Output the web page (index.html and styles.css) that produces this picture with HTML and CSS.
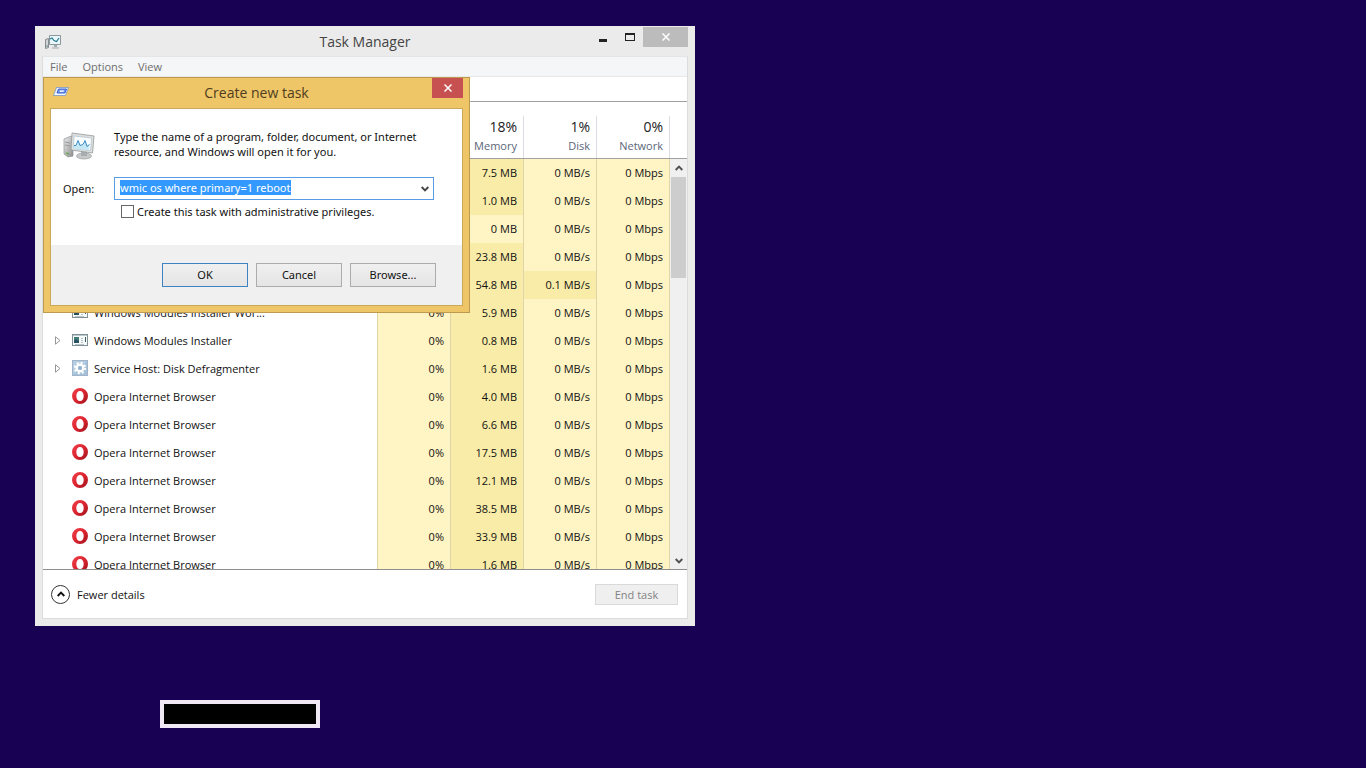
FILE: index.html
```html
<!DOCTYPE html>
<html lang="en">
    <head>
        <title>Task Manager</title>
        <meta charset="utf-8" />
        <meta name="viewport" content="width=device-width,initial-scale=1">
        <link rel="stylesheet" href="styles.css">
    </head>
    <body>
        <svg class="sprite" aria-hidden="true">
            <defs>
                <linearGradient id="red" x1="0" y1="0" x2="1" y2="1">
                    <stop offset="0" stop-color="#f0424c" />
                    <stop offset="0.5" stop-color="#dc2531" />
                    <stop offset="1" stop-color="#9c121b" />
                </linearGradient>
                <linearGradient id="metal" x1="0" y1="0" x2="1" y2="1">
                    <stop offset="0" stop-color="#eeeeee" />
                    <stop offset="1" stop-color="#8c8c8c" />
                </linearGradient>
            </defs>
            <symbol id="opera" viewBox="0 0 16 16">
                <path fill="url(#red)" fill-rule="evenodd" d="M8 0a8 8 0 1 0 0 16A8 8 0 0 0 8 0zM8 3c2.200 0 3.700 2 3.700 5S10.200 13 8 13 4.300 11 4.300 8 5.800 3 8 3z" />
            </symbol>
            <symbol id="module" viewBox="0 0 16 14">
                <rect x="0.5" y="1.500" width="15" height="11" fill="#f6faf9" stroke="#829096" />
                <path d="M1 2.500h14" stroke="#bcc9cc" />
                <rect x="2" y="4" width="5" height="6" fill="#417b76" />
                <path d="M2 8l2-2 2 2 1-1v3H2z" fill="#284f61" />
                <path d="M9 5.500h2M9 7.500h2M9 9.500h2M3 11.500h9" stroke="#b4c4ca" />
                <path d="M13.500 4v5" stroke="#3c5961" />
            </symbol>
            <symbol id="gear" viewBox="0 0 16 16">
                <rect x="0.5" y="0.5" width="15" height="15" fill="#b5cde2" stroke="#9fb4c8" />
                <path d="M1 15L15 1v14z" fill="#a6c1da" />
                <circle cx="8" cy="8" r="3.300" fill="none" stroke="#fff" stroke-width="2.400" />
                <circle cx="8" cy="8" r="5.200" fill="none" stroke="#fff" stroke-width="2" stroke-dasharray="2 2.084" />
                <circle cx="8" cy="8" r="2" fill="#93b3d1" />
            </symbol>
            <symbol id="monitor" viewBox="0 0 32 32">
                <path d="M1 8l7-3 2 2v18l-5 1-4-3z" fill="url(#metal)" stroke="#8e9496" stroke-width="0.7" />
                <path d="M2 11l5 1M2 14l5 1" stroke="#999" />
                <path d="M3 22l3 1" stroke="#67a954" stroke-width="1.500" />
                <ellipse cx="21" cy="25" rx="7.500" ry="3" fill="#c6c9ca" stroke="#999" stroke-width="0.7" />
                <path d="M18 20h6v5h-6z" fill="#a9adaf" />
                <path d="M9 2l22 3-1.500 17L8 19z" fill="#dedfdf" stroke="#929899" stroke-width="0.8" />
                <path d="M11 5l17.500 2-1 12.500-17-2z" fill="#fafdff" stroke="#a5b9c5" stroke-width="0.6" />
                <path d="M10.500 14l3 1 2-5 2 5 3-1 2-4 2 5 2-2-.500 6-15.500-1z" fill="#c6e8f5" />
                <path d="M11 14.500l2 0 2-5 2 5 3-1 2-4 2 6 2.500-2" fill="none" stroke="#348bc2" stroke-width="1" />
            </symbol>
            <symbol id="taskmgr" viewBox="0 0 16 16">
                <path d="M0.5 5.500l3-1v9l-3 1z" fill="#d2d5d7" stroke="#858d91" />
                <path d="M1 12h2" stroke="#668872" />
                <path d="M4.500 1.500h11v9h-11z" fill="#e9f7fb" stroke="#8a999e" />
                <path d="M5 5l2-1 2 2.500 2.500 1L14 4" fill="none" stroke="#21798d" stroke-width="1.200" />
                <path d="M9 11h3v2H9zM7 13.500h7v1H7z" fill="#9eabaf" />
            </symbol>
            <symbol id="run" viewBox="0 0 16 12">
                <path d="M3.500 1.500h12l-3 8H.5z" fill="#f2f7ff" stroke="#7795c7" stroke-width="0.8" />
                <path d="M5.500 3h8l-1.500 4h-8z" fill="#6c94f0" stroke="#3d64cc" />
                <path d="M7 4.200h4L10.500 6H6.500z" fill="#dfeaff" />
            </symbol>
            <symbol id="chevron" viewBox="0 0 8 6">
                <path d="M0.700 1L4 4.300 7.300 1" fill="none" stroke="currentColor" stroke-width="1.900" />
            </symbol>
            <symbol id="cross" viewBox="0 0 8 8">
                <path d="M0.500 0.500l7 7M7.500 0.500l-7 7" stroke="currentColor" stroke-width="1.500" />
            </symbol>
            <symbol id="expand" viewBox="0 0 6 9">
                <path d="M0.500 0.800v7.400L5 4.500z" fill="#fff" stroke="#969696" />
            </symbol>
        </svg>

        <main class="window">
            <header class="titlebar">
                <svg class="app-icon"><use href="#taskmgr" /></svg>
                <h1>Task Manager</h1>
                <div class="controls">
                    <button class="control" aria-label="Minimize"><span class="min"></span></button>
                    <button class="control" aria-label="Maximize"><span class="max"></span></button>
                    <button class="control close" aria-label="Close"><svg class="cross"><use href="#cross" /></svg></button>
                </div>
            </header>
            <div class="client">
                <nav class="menu">
                    <button>File</button>
                    <button>Options</button>
                    <button>View</button>
                </nav>
                <div class="tabs"></div>
                <div class="list">
                    <table>
                        <colgroup>
                            <col />
                            <col class="num" />
                            <col class="num" />
                            <col class="num" />
                            <col class="num" />
                        </colgroup>
                        <thead>
                            <tr>
                                <th></th>
                                <th></th>
                                <th><b>18%</b>Memory</th>
                                <th><b>1%</b>Disk</th>
                                <th><b>0%</b>Network</th>
                            </tr>
                        </thead>
                        <tbody>
                            <tr><td></td><td></td><td class="mid">7.5 MB</td><td>0 MB/s</td><td>0 Mbps</td></tr>
                            <tr><td></td><td></td><td class="mid">1.0 MB</td><td>0 MB/s</td><td>0 Mbps</td></tr>
                            <tr><td></td><td></td><td>0 MB</td><td>0 MB/s</td><td>0 Mbps</td></tr>
                            <tr><td></td><td></td><td class="mid">23.8 MB</td><td>0 MB/s</td><td>0 Mbps</td></tr>
                            <tr><td></td><td></td><td class="mid">54.8 MB</td><td class="mid">0.1 MB/s</td><td>0 Mbps</td></tr>
                            <tr><td><div class="name"><i></i><svg><use href="#module" /></svg>Windows Modules Installer Wor...</div></td><td>0%</td><td class="mid">5.9 MB</td><td>0 MB/s</td><td>0 Mbps</td></tr>
                            <tr><td><div class="name"><i><svg><use href="#expand" /></svg></i><svg><use href="#module" /></svg>Windows Modules Installer</div></td><td>0%</td><td class="mid">0.8 MB</td><td>0 MB/s</td><td>0 Mbps</td></tr>
                            <tr><td><div class="name"><i><svg><use href="#expand" /></svg></i><svg><use href="#gear" /></svg>Service Host: Disk Defragmenter</div></td><td>0%</td><td class="mid">1.6 MB</td><td>0 MB/s</td><td>0 Mbps</td></tr>
                            <tr><td><div class="name"><i></i><svg><use href="#opera" /></svg>Opera Internet Browser</div></td><td>0%</td><td class="mid">4.0 MB</td><td>0 MB/s</td><td>0 Mbps</td></tr>
                            <tr><td><div class="name"><i></i><svg><use href="#opera" /></svg>Opera Internet Browser</div></td><td>0%</td><td class="mid">6.6 MB</td><td>0 MB/s</td><td>0 Mbps</td></tr>
                            <tr><td><div class="name"><i></i><svg><use href="#opera" /></svg>Opera Internet Browser</div></td><td>0%</td><td class="mid">17.5 MB</td><td>0 MB/s</td><td>0 Mbps</td></tr>
                            <tr><td><div class="name"><i></i><svg><use href="#opera" /></svg>Opera Internet Browser</div></td><td>0%</td><td class="mid">12.1 MB</td><td>0 MB/s</td><td>0 Mbps</td></tr>
                            <tr><td><div class="name"><i></i><svg><use href="#opera" /></svg>Opera Internet Browser</div></td><td>0%</td><td class="mid">38.5 MB</td><td>0 MB/s</td><td>0 Mbps</td></tr>
                            <tr><td><div class="name"><i></i><svg><use href="#opera" /></svg>Opera Internet Browser</div></td><td>0%</td><td class="mid">33.9 MB</td><td>0 MB/s</td><td>0 Mbps</td></tr>
                            <tr><td><div class="name"><i></i><svg><use href="#opera" /></svg>Opera Internet Browser</div></td><td>0%</td><td class="mid">1.6 MB</td><td>0 MB/s</td><td>0 Mbps</td></tr>
                        </tbody>
                    </table>
                    <div class="side">
                        <div class="side-head"></div>
                        <div class="scrollbar">
                            <button class="arrow" aria-label="Scroll up"><svg class="chevron up"><use href="#chevron" /></svg></button>
                            <div class="track"><div class="thumb"></div></div>
                            <button class="arrow" aria-label="Scroll down"><svg class="chevron"><use href="#chevron" /></svg></button>
                        </div>
                    </div>
                </div>
                <footer class="footer">
                    <button class="fewer"><span class="round"><svg class="chevron up"><use href="#chevron" /></svg></span>Fewer details</button>
                    <button class="end" disabled>End task</button>
                </footer>
            </div>
        </main>

        <form class="dialog" role="dialog" aria-labelledby="dialog-title">
            <header class="titlebar">
                <svg class="app-icon"><use href="#run" /></svg>
                <h2 id="dialog-title">Create new task</h2>
                <div class="controls">
                    <button type="button" class="control close" aria-label="Close"><svg class="cross"><use href="#cross" /></svg></button>
                </div>
            </header>
            <div class="panel">
                <div class="fields">
                    <div class="intro">
                        <svg class="monitor"><use href="#monitor" /></svg>
                        <p>Type the name of a program, folder, document, or Internet resource, and Windows will open it for you.</p>
                    </div>
                    <div class="open">
                        <label for="command">Open:</label>
                        <div class="combo">
                            <input type="text" id="command" value="wmic os where primary=1 reboot" autocomplete="off" spellcheck="false" />
                            <button type="button" aria-label="Show history"><svg class="chevron"><use href="#chevron" /></svg></button>
                        </div>
                    </div>
                    <div class="admin">
                        <input type="checkbox" id="admin" />
                        <label for="admin">Create this task with administrative privileges.</label>
                    </div>
                </div>
                <div class="actions">
                    <button class="primary">OK</button>
                    <button type="button">Cancel</button>
                    <button type="button">Browse...</button>
                </div>
            </div>
        </form>

        <div class="console"></div>

        <script src="main.js"></script>
    </body>
</html>
```

FILE: styles.css
```css
* {
    padding: 0;
    margin: 0;
    box-sizing: border-box;
}
:focus {
    outline: none;
}
body {
    position: relative;
    min-height: 100vh;
    overflow: hidden;
    background-color: #180052;
    color: #111;
    font-family: "Open Sans", "Noto Sans", sans-serif;
    font-size: 11px;
    line-height: 15px;
}
button,
input {
    font: inherit;
    color: inherit;
    border: 0;
    background: none;
}
.sprite {
    position: absolute;
    width: 0;
    height: 0;
}

/* main window */
.window {
    position: absolute;
    top: 26px;
    left: 35px;
    display: flex;
    flex-direction: column;
    width: 660px;
    height: 600px;
    padding: 0 7px 7px;
    background-color: #ebebeb;
}
.titlebar {
    display: grid;
    grid-template-columns: 1fr auto 1fr;
    flex: none;
    height: 30px;
}
.titlebar h1,
.titlebar h2 {
    font-size: 14px;
    font-weight: 400;
    line-height: 30px;
    color: #444;
}
.window .titlebar h1 {
    line-height: 32px;
}
.app-icon {
    width: 16px;
    height: 16px;
    margin: 8px 0 0 3px;
}
.controls {
    display: flex;
    justify-content: flex-end;
}
.window .controls {
    padding-top: 1px;
}
.control {
    display: flex;
    align-items: center;
    justify-content: center;
    width: 27px;
    height: 20px;
}
.control.close {
    width: 45px;
    color: #fff;
    background-color: #bcbcbc;
}
.cross {
    width: 8px;
    height: 8px;
}
.min {
    width: 8px;
    height: 3px;
    margin-top: 6px;
    background-color: #222;
}
.max {
    width: 10px;
    height: 8px;
    border: 1px solid #222;
    border-top-width: 2px;
}
.client {
    display: flex;
    flex-direction: column;
    flex: 1;
    min-height: 0;
    background-color: #fff;
    border: 1px solid #dcdcdc;
    border-top-color: #e3e5e6;
}
.menu {
    display: flex;
    flex: none;
    gap: 15px;
    height: 20px;
    padding-left: 7px;
    color: #6d6d6d;
    background-color: #f5f6f7;
    border-bottom: 1px solid #e8e8e8;
}
.tabs {
    flex: none;
    height: 25px;
    border-bottom: 1px solid #a0a0a0;
}

/* process list */
.list {
    display: flex;
    flex: 1;
    align-items: flex-start;
    min-height: 0;
    overflow: hidden;
    border-bottom: 1px solid #8e8e8e;
}
table {
    flex: 1;
    table-layout: fixed;
    width: 100%;
    border-collapse: separate;
    border-spacing: 0;
}
.num {
    width: 73px;
}
th {
    height: 57px;
    padding: 14px 6px 0 0;
    text-align: right;
    vertical-align: top;
    font-weight: 400;
    color: #5c6579;
    border-bottom: 1px solid #a0a0a0;
    border-right: 1px solid #d9dce2;
    border-image: linear-gradient(#fff 14px, #d9dce2 14px, #d9dce2 56px, #a0a0a0 56px) 0 1 1 0;
}
th b {
    display: block;
    font-size: 14px;
    font-weight: 400;
    line-height: 22px;
    color: #222;
}
td {
    height: 28px;
    padding: 0 6px 2px 0;
    text-align: right;
    white-space: nowrap;
    background-color: #fff4c4;
    border-right: 1px solid #dfd5a7;
}
td:first-child {
    padding-right: 0;
    background-color: #fff;
}
td.mid {
    background-color: #f9eca8;
}
.name {
    display: flex;
    align-items: center;
}
.name svg {
    width: 16px;
    height: 16px;
    margin-right: 6px;
}
.name i {
    display: flex;
    width: 29px;
    padding-left: 12px;
}
.name i svg {
    width: 6px;
    height: 9px;
    margin: 0;
}
.side {
    display: flex;
    flex: none;
    flex-direction: column;
    align-self: stretch;
    width: 17px;
}
.side-head {
    flex: none;
    height: 57px;
    border-bottom: 1px solid #a0a0a0;
}
.scrollbar {
    display: flex;
    flex: 1;
    flex-direction: column;
    color: #505050;
    background-color: #f0f0f0;
}
.arrow {
    display: flex;
    align-items: center;
    justify-content: center;
    height: 17px;
}
.track {
    flex: 1;
    padding: 1px;
}
.thumb {
    height: 101px;
    background-color: #cdcdcd;
}
.chevron {
    width: 8px;
    height: 6px;
}
.chevron.up {
    transform: rotate(180deg);
}
.footer {
    display: flex;
    flex: none;
    align-items: center;
    justify-content: space-between;
    height: 48px;
    padding: 0 9px 0 8px;
}
.fewer {
    display: flex;
    align-items: center;
    gap: 7px;
}
.round {
    display: flex;
    align-items: center;
    justify-content: center;
    width: 19px;
    height: 19px;
    border: 1px solid #333;
    border-radius: 50%;
}
.end {
    width: 83px;
    height: 21px;
    color: #838383;
    background-color: #efefef;
    border: 1px solid #d9d9d9;
}

/* run dialog */
.dialog {
    position: absolute;
    top: 77px;
    left: 43px;
    width: 427px;
    padding: 0 6px 6px;
    background-color: #eec567;
    border: 1px solid #bd9a4d;
    font-family: "Noto Sans", "Open Sans", sans-serif;
}
.dialog .titlebar h2 {
    font-family: "Open Sans", "Noto Sans", sans-serif;
    color: #503d1d;
}
.dialog .app-icon {
    width: 16px;
    height: 12px;
}
.dialog .control.close {
    width: 31px;
    background-color: #c75050;
}
.panel {
    background-color: #fff;
    border: 1px solid #cba859;
}
.fields {
    height: 136px;
    padding: 20px 28px 0 12px;
}
.intro {
    display: flex;
    gap: 19px;
}
.monitor {
    flex: none;
    width: 32px;
    height: 32px;
    margin-top: 2px;
}
.intro p {
    width: 320px;
}
.open {
    display: flex;
    align-items: center;
    margin-top: 14px;
}
.open label {
    width: 51px;
}
.combo {
    display: flex;
    flex: 1;
    height: 23px;
    border: 1px solid #569de5;
}
.combo input {
    flex: 1;
    min-width: 0;
    height: 19px;
    padding-left: 5px;
}
.combo input::selection {
    color: #fff;
    background-color: #3399ff;
}
.combo button {
    display: flex;
    align-items: center;
    justify-content: center;
    width: 17px;
    color: #444;
}
.admin {
    display: flex;
    align-items: center;
    gap: 3px;
    margin: 4px 0 0 58px;
}
.admin input {
    appearance: none;
    width: 13px;
    height: 13px;
    background-color: #fff;
    border: 1px solid #666;
}
.actions {
    display: flex;
    justify-content: flex-end;
    gap: 8px;
    height: 60px;
    padding: 18px 26px 0 0;
    background-color: #f0f0f0;
}
.actions button {
    width: 86px;
    height: 24px;
    padding-bottom: 1px;
    background-image: linear-gradient(#f0f0f0, #e5e5e5);
    border: 1px solid #acacac;
}
.actions .primary {
    border-color: #3c83c4;
}

.console {
    position: absolute;
    top: 700px;
    left: 160px;
    width: 160px;
    height: 28px;
    background-color: #000;
    border: 4px solid #f0e8f4;
}
```

FILE: main.js
```js
var command = document.querySelector("#command");
command.focus();
command.select();
```
